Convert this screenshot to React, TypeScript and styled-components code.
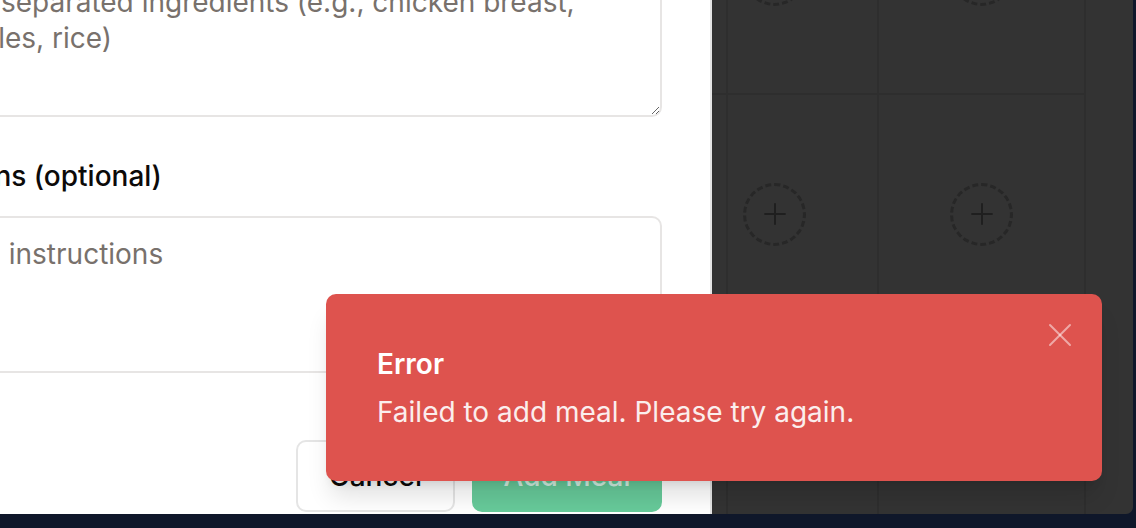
import React from 'react';
import styled, { createGlobalStyle } from 'styled-components';
import { Plus, X } from 'lucide-react';

const GlobalStyle = createGlobalStyle`
  html, body {
    margin: 0;
    padding: 0;
    background: #0f172a;
  }
  body {
    font-family: Inter, "Noto Sans", sans-serif;
  }
  * {
    box-sizing: border-box;
  }
`;

const Frame = styled.div`
  position: relative;
  display: flex;
  width: 1133px;
  height: 514px;
  overflow: hidden;
  border-bottom-right-radius: 7px;
`;

const Dialog = styled.div`
  flex: 0 0 892px;
  margin-left: -180px;
  padding: 0 48px;
  background: #fff;
  border-right: 2px solid #e5e5e5;
`;

// the dialog body is scrolled: the first field sits above the top edge
const Form = styled.form`
  display: flex;
  flex-direction: column;
  gap: 41px;
  margin-top: -94px;
`;

const Field = styled.div`
  display: flex;
  flex-direction: column;
  gap: 22px;
`;

const Label = styled.label`
  font-size: 28px;
  line-height: 36px;
  font-weight: 500;
  color: #0c0a09;
`;

const TextArea = styled.textarea<{ $height: number }>`
  display: block;
  width: 100%;
  height: ${({ $height }) => $height}px;
  padding: 18px 21px;
  border: 2px solid #e7e5e4;
  border-radius: 10px;
  font-family: Inter, "Noto Sans", sans-serif;
  font-size: 28px;
  line-height: 36px;
  color: #0c0a09;
  background: #fff;
  resize: vertical;
  outline: none;

  &::placeholder {
    color: #78716c;
  }
`;

const Footer = styled.div`
  display: flex;
  justify-content: flex-end;
  gap: 17px;
  margin-top: 67px;
`;

const Button = styled.button<{ $primary?: boolean }>`
  height: 72px;
  padding: 0 ${({ $primary }) => ($primary ? 29.5 : 31)}px;
  border-radius: 10px;
  font-family: Inter, "Noto Sans", sans-serif;
  font-size: 28px;
  font-weight: 500;
  border: 2px solid ${({ $primary }) => ($primary ? '#67ca9a' : '#e5e5e5')};
  background: ${({ $primary }) => ($primary ? '#67ca9a' : '#fff')};
  color: ${({ $primary }) => ($primary ? '#d3f1e2' : '#0c0a09')};
`;

const Pane = styled.div`
  flex: 1;
  min-width: 0;
  overflow: hidden;
  background:
    linear-gradient(to right, transparent 14px, #2e2e2e 14px, #2e2e2e 16px, transparent 16px),
    #333333;
`;

const Board = styled.div`
  display: grid;
  grid-template-columns: repeat(2, 207px);
  grid-auto-rows: 240px;
  margin: -145px 0 0 -40px;
`;

const Slot = styled.div`
  display: flex;
  align-items: center;
  justify-content: center;
  border-right: 2px solid #2e2e2e;
  border-bottom: 2px solid #2e2e2e;
`;

const AddSlot = styled.div`
  display: flex;
  align-items: center;
  justify-content: center;
  width: 63px;
  height: 63px;
  border-radius: 50%;
  border: 3px dashed #272727;
  color: #1f1f1f;
`;

const Toast = styled.div`
  position: absolute;
  right: 31px;
  bottom: 33px;
  width: 776px;
  padding: 52px 51px 51px;
  border-radius: 10px;
  background: #de534e;
  color: #fff;
  box-shadow: 0 20px 25px -5px rgba(0, 0, 0, 0.12), 0 8px 10px -6px rgba(0, 0, 0, 0.1);
`;

const ToastTitle = styled.div`
  font-size: 28px;
  line-height: 36px;
  font-weight: 600;
`;

const ToastText = styled.div`
  margin-top: 12px;
  font-size: 28px;
  line-height: 36px;
  opacity: 0.9;
`;

const Close = styled.button`
  position: absolute;
  top: 21px;
  right: 22px;
  display: flex;
  padding: 0;
  border: 0;
  background: none;
  color: rgba(255, 255, 255, 0.5);
`;

const slots = [
  { id: 1, open: true },
  { id: 2, open: true },
  { id: 3, open: true },
  { id: 4, open: true },
  { id: 5, open: false },
  { id: 6, open: false },
];

export default function App() {
  return (
    <>
      <GlobalStyle />
      <Frame>
        <Dialog>
          <Form>
            <Field>
              <Label>Ingredients</Label>
              <TextArea
                $height={153}
                placeholder="Comma separated ingredients (e.g., chicken breast, vegetables, rice)"
              />
            </Field>
            <Field>
              <Label>Instructions (optional)</Label>
              <TextArea $height={157} placeholder="Cooking instructions" />
            </Field>
          </Form>
          <Footer>
            <Button type="button">Cancel</Button>
            <Button type="button" $primary>Add Meal</Button>
          </Footer>
        </Dialog>
        <Pane>
          <Board>
            {slots.map(({ id, open }) => (
              <Slot key={id}>
                {open && (
                  <AddSlot>
                    <Plus size={34} strokeWidth={2} absoluteStrokeWidth />
                  </AddSlot>
                )}
              </Slot>
            ))}
          </Board>
        </Pane>
        <Toast>
          <ToastTitle>Error</ToastTitle>
          <ToastText>Failed to add meal. Please try again.</ToastText>
          <Close type="button">
            <X size={40} strokeWidth={2} absoluteStrokeWidth />
          </Close>
        </Toast>
      </Frame>
    </>
  );
}
